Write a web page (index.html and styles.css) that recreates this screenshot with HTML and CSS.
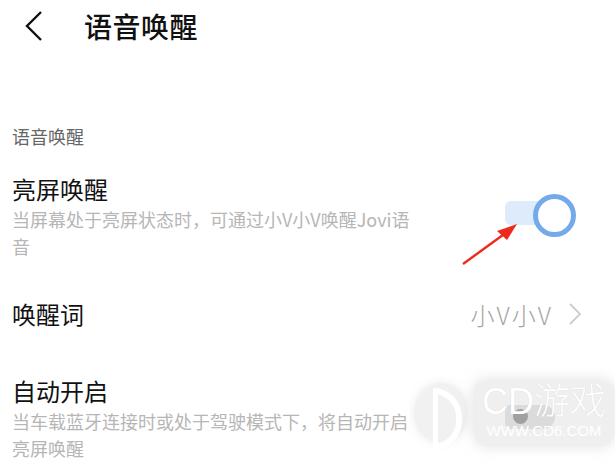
FILE: index.html
```html
<!DOCTYPE html>
<html lang="zh-CN">
<head>
    <meta charset="UTF-8">
    <meta name="viewport" content="width=device-width, initial-scale=1.0">
    <title>语音唤醒</title>
    <link rel="stylesheet" href="styles.css">
</head>
<body>
    <div class="page">
        <!-- Top bar -->
        <div class="topbar">
            <svg class="back" width="20" height="30" viewBox="0 0 20 30">
                <polyline points="17,1 3,15 17,29" fill="none" stroke="#111" stroke-width="2.4"/>
            </svg>
            <h1>语音唤醒</h1>
        </div>

        <div class="group-label">语音唤醒</div>

        <!-- Screen-on wake -->
        <div class="row">
            <div class="row-text">
                <div class="row-title">亮屏唤醒</div>
                <div class="row-desc">当屏幕处于亮屏状态时，可通过小V小V唤醒Jovi语音</div>
            </div>
            <div class="switch on">
                <span class="track"></span>
                <span class="knob"></span>
            </div>
        </div>

        <!-- Wake word -->
        <div class="row link-row">
            <div class="row-title">唤醒词</div>
            <div class="row-value">
                <span>小V小V</span>
                <svg width="14" height="22" viewBox="0 0 14 22">
                    <polyline points="2,1 12,11 2,21" fill="none" stroke="#cdcdcd" stroke-width="1.8"/>
                </svg>
            </div>
        </div>

        <!-- Auto start -->
        <div class="row last-row">
            <div class="row-text">
                <div class="row-title">自动开启</div>
                <div class="row-desc">当车载蓝牙连接时或处于驾驶模式下，将自动开启亮屏唤醒</div>
            </div>
            <div class="switch off">
                <span class="track"></span>
                <span class="knob"></span>
            </div>
        </div>

        <!-- Pointer arrow -->
        <svg class="pointer" width="60" height="46" viewBox="0 0 60 46">
            <line x1="2" y1="44" x2="46" y2="12" stroke="#ee2a1c" stroke-width="2.4"/>
            <polygon points="56,4 36,11 46,20" fill="#ee2a1c"/>
        </svg>

        <!-- Site mark -->
        <div class="mark">
            <span class="mark-logo"><span class="mark-d"></span></span>
            <div class="mark-box">
                <div class="mark-name">CD游戏</div>
                <div class="mark-url">WWW.CD6.COM</div>
            </div>
        </div>
    </div>
</body>
</html>
```

FILE: styles.css
```css
body {
    margin: 0;
    background: #fff;
    font-family: "Noto Sans CJK SC", "Noto Sans", sans-serif;
    color: #111;
}
.page {
    position: relative;
    width: 615px;
    height: 469px;
    overflow: hidden;
}
.topbar {
    display: flex;
    align-items: center;
    height: 52px;
    padding-left: 24px;
}
.topbar h1 {
    margin: 0 0 0 40px;
    font-size: 28px;
    font-weight: 500;
    letter-spacing: 0.5px;
}
.group-label {
    margin: 70px 0 0 12px;
    font-size: 18px;
    color: #666;
    line-height: 28px;
}
.row {
    display: flex;
    align-items: center;
    justify-content: space-between;
    padding: 0 12px;
}
.row-text {
    width: 410px;
    padding: 22px 0 12px;
}
.last-row .row-text {
    padding-top: 24px;
}
.row-title {
    font-size: 24px;
    line-height: 34px;
}
.row-desc {
    font-size: 18px;
    line-height: 27px;
    color: #b6b6b6;
}
.link-row {
    height: 72px;
    margin-top: 6px;
}
.row-value {
    display: flex;
    align-items: center;
    gap: 15px;
    padding-right: 21px;
    font-size: 24px;
    font-weight: 300;
    letter-spacing: 2px;
    color: #a4a4a4;
}
.switch {
    position: relative;
    width: 72px;
    height: 46px;
    margin-right: 26px;
}
.switch .track {
    position: absolute;
    left: 0;
    width: 50px;
    height: 24px;
    border-radius: 6px 12px 12px 6px;
}
.switch .knob {
    position: absolute;
    border-radius: 50%;
}
.switch.on .track {
    top: 13px;
    background: #deebfa;
}
.switch.on .knob {
    left: 28px;
    top: 6px;
    width: 33px;
    height: 33px;
    border: 5px solid #74aae9;
    background: #fff;
}
.switch.off .track {
    top: 16px;
    background: #e2e2e2;
}
.switch.off .knob {
    left: 8px;
    top: 20px;
    width: 15px;
    height: 15px;
    background: #8c8c8c;
}
.pointer {
    position: absolute;
    left: 461px;
    top: 220px;
}
.mark {
    position: absolute;
    left: 414px;
    top: 380px;
    display: flex;
    align-items: center;
    white-space: nowrap;
}
.mark-logo {
    display: flex;
    flex-shrink: 0;
    justify-content: flex-end;
    width: 54px;
    height: 60px;
    border-radius: 50%;
    background: rgba(190, 190, 190, 0.22);
    box-shadow: 0 0 10px rgba(190, 190, 190, 0.3);
}
.mark-d {
    width: 18px;
    height: 50px;
    margin: 5px 6px 0 0;
    border: 6px solid rgba(255, 255, 255, 0.95);
    border-left-width: 5px;
    border-radius: 0 30px 30px 0;
}
.mark-box {
    flex-shrink: 0;
    margin-left: 6px;
    padding: 2px 8px 6px;
    background: rgba(205, 205, 205, 0.32);
    border-radius: 12px;
    box-shadow: 0 0 14px rgba(205, 205, 205, 0.6);
    color: #fff;
    text-align: center;
}
.mark-name {
    font-family: "Liberation Sans", "Noto Sans CJK SC", sans-serif;
    font-size: 36px;
    font-weight: 300;
    line-height: 40px;
    text-shadow: 0 0 1px rgba(0, 0, 0, 0.12);
}
.mark-url {
    font-family: "Liberation Sans", sans-serif;
    font-size: 15px;
    line-height: 18px;
}
```
